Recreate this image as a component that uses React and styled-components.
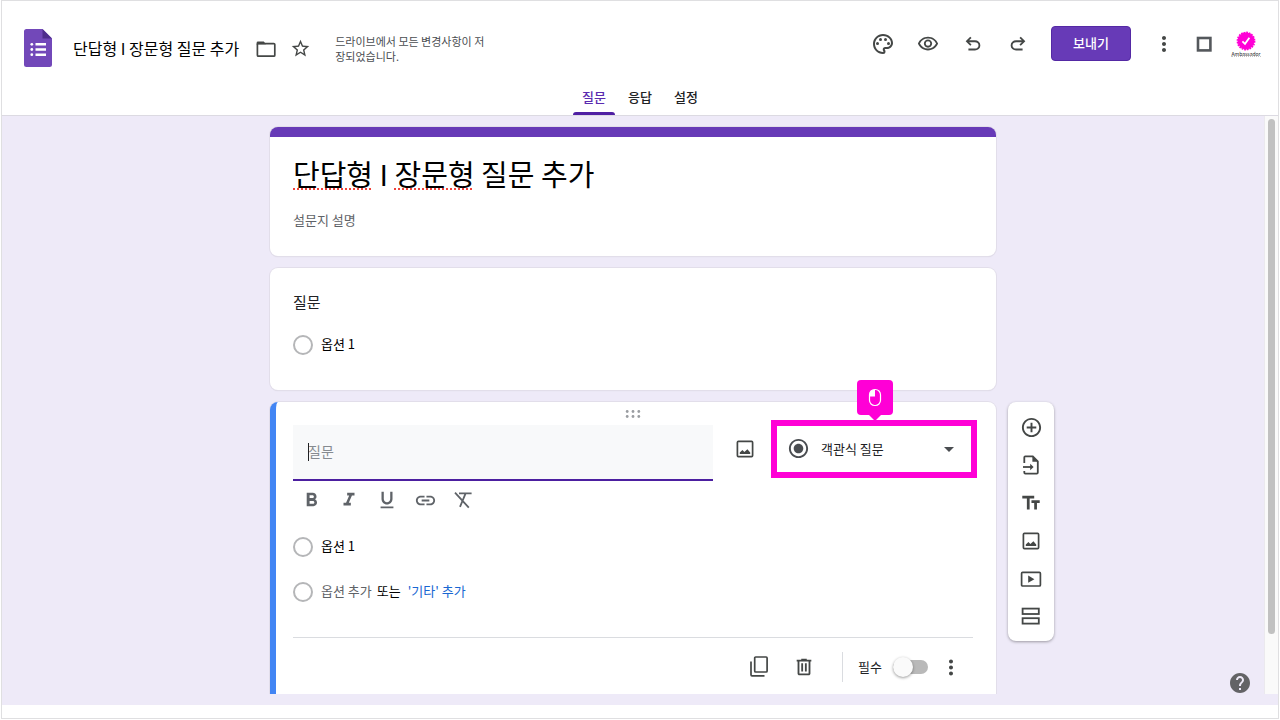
import { useState } from 'react'
import styled, { createGlobalStyle } from 'styled-components'
import {
    MdAddCircleOutline,
    MdArrowDropDown,
    MdFormatBold,
    MdFormatItalic,
    MdFormatUnderlined,
    MdHelp,
    MdLink,
    MdMoreVert,
    MdOutlinePalette,
    MdOutlineVisibility,
    MdRadioButtonChecked,
    MdStarBorder,
    MdTextFields,
} from 'react-icons/md'

const TABS = ['질문', '응답', '설정']

function FormsLogo() {
    return (
        <svg width="28" height="38" viewBox="0 0 28 38" aria-hidden="true">
            <path d="M2.5 0H18.5L28 9.5V35.5A2.5 2.5 0 0 1 25.5 38H2.5A2.5 2.5 0 0 1 0 35.5V2.5A2.5 2.5 0 0 1 2.5 0Z" fill="#7248b9" />
            <path d="M18.5 0L28 9.5H18.5Z" fill="#4e2d8c" />
            <path d="M11.5 14H22V16.5H11.5ZM11.5 19.2H22V21.7H11.5ZM11.5 24.5H22V27H11.5Z" fill="#fff" />
            <circle cx="7.8" cy="15.3" r="1.4" fill="#fff" />
            <circle cx="7.8" cy="20.5" r="1.4" fill="#fff" />
            <circle cx="7.8" cy="25.7" r="1.4" fill="#fff" />
        </svg>
    )
}

function FolderIcon() {
    return (
        <svg width="24" height="24" viewBox="0 0 24 24" fill="none" stroke="currentColor" strokeWidth="1.7" aria-hidden="true">
            <rect x="3.4" y="6.6" width="17.4" height="12.6" rx="1" />
            <path d="M2.6 8V6A1.4 1.4 0 0 1 4 4.6H9.8L12 7.2H3Z" fill="currentColor" stroke="none" />
        </svg>
    )
}

function UndoIcon() {
    return (
        <svg width="22" height="22" viewBox="0 -960 960 960" fill="currentColor" aria-hidden="true">
            <path d="M280-200v-80h284q63 0 109.5-40T720-420q0-60-46.5-100T564-560H312l104 104-56 56-200-200 200-200 56 56-104 104h252q97 0 166.5 63T800-420q0 94-69.5 157T564-200H280Z" />
        </svg>
    )
}

function RedoIcon() {
    return (
        <svg width="22" height="22" viewBox="0 -960 960 960" fill="currentColor" aria-hidden="true">
            <path d="M396-200q-97 0-166.5-63T160-420q0-94 69.5-157T396-640h252L544-744l56-56 200 200-200 200-56-56 104-104H396q-63 0-109.5 40T240-420q0 60 46.5 100T396-280h284v80H396Z" />
        </svg>
    )
}

function SquareIcon() {
    return (
        <svg width="24" height="24" viewBox="0 0 24 24" fill="none" stroke="#54585c" strokeWidth="2.6" aria-hidden="true">
            <rect x="6" y="6" width="12.4" height="12.4" />
        </svg>
    )
}

function ClearFormatIcon() {
    return (
        <svg width="24" height="24" viewBox="0 0 24 24" fill="none" stroke="currentColor" strokeWidth="1.8" aria-hidden="true">
            <path d="M8 5.4H20.6M14.6 5.4L9 18.8M4 4.6L17.8 19.6" />
        </svg>
    )
}

function TrashIcon() {
    return (
        <svg width="22" height="22" viewBox="0 -960 960 960" fill="currentColor" aria-hidden="true">
            <path d="M280-120q-33 0-56.5-23.5T200-200v-520h-40v-80h200v-40h240v40h200v80h-40v520q0 33-23.5 56.5T680-120H280Zm400-600H280v520h400v-520ZM360-280h80v-360h-80v360Zm160 0h80v-360h-80v360Z" />
        </svg>
    )
}

function CopyIcon() {
    return (
        <svg width="24" height="24" viewBox="0 0 24 24" fill="none" stroke="currentColor" strokeWidth="1.7" aria-hidden="true">
            <rect x="7.7" y="2" width="12.4" height="15" rx="1" />
            <path d="M4 6.5V19.8A1 1 0 0 0 5 20.8H17.5" />
        </svg>
    )
}

function PhotoIcon() {
    return (
        <svg width="24" height="24" viewBox="0 0 24 24" fill="none" stroke="currentColor" strokeWidth="1.7" aria-hidden="true">
            <rect x="4.4" y="4.4" width="15.2" height="15.2" rx="1" />
            <path d="M6.8 17V15.6L9.4 13L11.4 15L14.4 12.2L17.2 15.6V17Z" fill="currentColor" stroke="none" />
        </svg>
    )
}

function VideoIcon() {
    return (
        <svg width="24" height="24" viewBox="0 0 24 24" fill="none" stroke="currentColor" strokeWidth="1.7" aria-hidden="true">
            <rect x="2.6" y="5.4" width="18.8" height="13.6" rx="1" />
            <path d="M9.2 8.6L15.4 12.2L9.2 15.8Z" fill="currentColor" stroke="none" />
        </svg>
    )
}

function ImportIcon() {
    return (
        <svg width="24" height="24" viewBox="0 0 24 24" fill="none" stroke="currentColor" strokeWidth="1.8" aria-hidden="true">
            <path d="M5.3 10V4.4A1 1 0 0 1 6.3 3.4H13.8L18.8 8.4V19.6A1 1 0 0 1 17.8 20.6H6.3A1 1 0 0 1 5.3 19.6V18" />
            <path d="M13.4 3.4V8.8H18.8Z" fill="currentColor" stroke="none" />
            <path d="M4 14H13" />
            <path d="M11.2 10.8L14.6 14L11.2 17.2Z" fill="currentColor" stroke="none" />
        </svg>
    )
}

function SectionIcon() {
    return (
        <svg width="24" height="24" viewBox="0 0 24 24" fill="none" stroke="currentColor" strokeWidth="1.8" aria-hidden="true">
            <rect x="3.6" y="3.6" width="16.2" height="5.4" />
            <rect x="3.6" y="13.2" width="16.2" height="5.4" />
        </svg>
    )
}

function DragDots() {
    return (
        <svg width="18" height="10" viewBox="0 0 18 10" fill="#9a9da1" aria-hidden="true">
            {[3.2, 9, 14.8].map((x) => (
                <g key={x}>
                    <circle cx={x} cy="2.5" r="1.4" />
                    <circle cx={x} cy="7.5" r="1.4" />
                </g>
            ))}
        </svg>
    )
}

function MouseIcon() {
    return (
        <svg width="14" height="19" viewBox="0 0 14 19" fill="none" aria-hidden="true">
            <rect x="1.5" y="1.5" width="11" height="16" rx="5.2" stroke="#fff" strokeWidth="1.2" />
            <path d="M7 1.5V8.5H1.5V6.7A5.2 5.2 0 0 1 6.7 1.5Z" fill="#fff" />
        </svg>
    )
}

function Header() {
    const [active, setActive] = useState(TABS[0])

    return (
        <TopBar>
            <TopRow>
                <DocGroup>
                    <FormsLogo />
                    <DocName>단답형 I 장문형 질문 추가</DocName>
                    <DocActions>
                        <IconButton aria-label="폴더로 이동"><FolderIcon /></IconButton>
                        <IconButton aria-label="별표"><MdStarBorder size={21} /></IconButton>
                    </DocActions>
                    <SaveStatus>드라이브에서 모든 변경사항이 저장되었습니다.</SaveStatus>
                </DocGroup>
                <ToolGroup>
                    <IconButton aria-label="테마 맞춤설정"><MdOutlinePalette size={24} /></IconButton>
                    <IconButton aria-label="미리보기"><MdOutlineVisibility size={22} /></IconButton>
                    <IconButton aria-label="실행취소"><UndoIcon /></IconButton>
                    <IconButton aria-label="재실행"><RedoIcon /></IconButton>
                    <SendButton>보내기</SendButton>
                    <AccountGroup>
                        <IconButton aria-label="더보기"><MdMoreVert size={24} /></IconButton>
                        <IconButton aria-label="앱"><SquareIcon /></IconButton>
                        <Avatar aria-label="계정">
                            <svg width="20" height="20" viewBox="0 0 20 20" aria-hidden="true">
                                <circle cx="10" cy="10" r="8.4" fill="#ff00d6" />
                                <circle cx="10" cy="10" r="8.6" fill="none" stroke="#ff00d6" strokeWidth="1.6" strokeDasharray="1.8 0.9" />
                                <path d="M6.4 10.4L9 12.8L13.4 6.8" fill="none" stroke="#fff" strokeWidth="1.8" />
                            </svg>
                            <AvatarName>Ambassador</AvatarName>
                        </Avatar>
                    </AccountGroup>
                </ToolGroup>
            </TopRow>
            <TabList>
                {TABS.map((tab) => (
                    <Tab key={tab} $active={tab === active} onClick={() => setActive(tab)}>{tab}</Tab>
                ))}
            </TabList>
        </TopBar>
    )
}

function QuestionEditor() {
    return (
        <EditorCard>
            <DragHandle><DragDots /></DragHandle>
            <QuestionRow>
                <QuestionField>
                    <Caret />
                    <QuestionInput type="text" placeholder="질문" aria-label="질문" />
                </QuestionField>
                <TypeGroup>
                    <IconButton aria-label="이미지 추가"><PhotoIcon /></IconButton>
                    <TypePicker>
                        <TypeIcon><MdRadioButtonChecked size={23} /></TypeIcon>
                        <TypeSelect aria-label="질문 유형" defaultValue="radio">
                            <option value="radio">객관식 질문</option>
                            <option value="short">단답형</option>
                            <option value="long">장문형</option>
                        </TypeSelect>
                        <TypeArrow><MdArrowDropDown size={24} /></TypeArrow>
                        <ClickHint><MouseIcon /></ClickHint>
                    </TypePicker>
                </TypeGroup>
            </QuestionRow>
            <FormatRow>
                <IconButton $soft aria-label="굵게"><MdFormatBold size={23} /></IconButton>
                <IconButton $soft aria-label="기울임꼴"><MdFormatItalic size={22} /></IconButton>
                <IconButton $soft aria-label="밑줄"><MdFormatUnderlined size={22} /></IconButton>
                <IconButton $soft aria-label="링크 삽입"><MdLink size={23} /></IconButton>
                <IconButton $soft aria-label="서식 삭제"><ClearFormatIcon /></IconButton>
            </FormatRow>
            <Option>
                <Radio type="radio" id="edit-option" name="edit" />
                <OptionLabel htmlFor="edit-option">옵션 1</OptionLabel>
            </Option>
            <Option>
                <Radio type="radio" id="edit-add" name="edit" />
                <OptionLabel htmlFor="edit-add" $muted>옵션 추가</OptionLabel>
                <OrText>또는</OrText>
                <OtherButton>'기타' 추가</OtherButton>
            </Option>
            <EditorFooter>
                <FooterActions>
                    <IconButton aria-label="복사"><CopyIcon /></IconButton>
                    <IconButton aria-label="삭제"><TrashIcon /></IconButton>
                </FooterActions>
                <RequiredGroup>
                    <RequiredLabel htmlFor="required">필수</RequiredLabel>
                    <Toggle type="checkbox" id="required" />
                    <IconButton aria-label="옵션 더보기"><MdMoreVert size={25} /></IconButton>
                </RequiredGroup>
            </EditorFooter>
        </EditorCard>
    )
}

function App() {
    return (
        <>
            <GlobalStyle />
            <Frame>
                <Header />
                <Canvas>
                    <ScrollArea>
                        <FormGrid>
                            <TitleCard>
                                <FormTitle>
                                    <Misspelled>단답형</Misspelled> I <Misspelled>장문형</Misspelled> 질문 추가
                                </FormTitle>
                                <Description type="text" placeholder="설문지 설명" aria-label="설문지 설명" />
                            </TitleCard>
                            <QuestionCard>
                                <QuestionTitle>질문</QuestionTitle>
                                <Option>
                                    <Radio type="radio" id="view-option" name="view" />
                                    <OptionLabel htmlFor="view-option">옵션 1</OptionLabel>
                                </Option>
                            </QuestionCard>
                            <QuestionEditor />
                            <SideTools>
                                <IconButton aria-label="질문 추가"><MdAddCircleOutline size={23} /></IconButton>
                                <IconButton aria-label="질문 가져오기"><ImportIcon /></IconButton>
                                <IconButton aria-label="제목 및 설명 추가"><MdTextFields size={22} /></IconButton>
                                <IconButton aria-label="이미지 추가"><PhotoIcon /></IconButton>
                                <IconButton aria-label="동영상 추가"><VideoIcon /></IconButton>
                                <IconButton aria-label="섹션 추가"><SectionIcon /></IconButton>
                            </SideTools>
                        </FormGrid>
                        <ScrollTrack><ScrollThumb /></ScrollTrack>
                    </ScrollArea>
                    <HelpButton aria-label="도움말"><MdHelp size={24} /></HelpButton>
                </Canvas>
            </Frame>
        </>
    )
}

const GlobalStyle = createGlobalStyle`
    * {
        box-sizing: border-box;
    }
    body {
        margin: 0;
        background: #fff;
        color: #202124;
        font-family: "Noto Sans CJK KR", "Noto Sans", sans-serif;
        font-size: 13px;
    }
    button, input, select {
        font: inherit;
        color: inherit;
        margin: 0;
    }
    svg {
        display: block;
    }
`

const Frame = styled.div`
    display: flex;
    flex-direction: column;
    height: calc(100vh - 1px);
    margin: 0 1px;
    padding-bottom: 13px;
    border: 1px solid #dfdfe1;
`

const TopBar = styled.header`
    flex: none;
    border-bottom: 1px solid #dcdae2;
`

const TopRow = styled.div`
    display: flex;
    justify-content: space-between;
    align-items: flex-start;
    height: 79px;
    padding: 23px 18px 0 22px;
`

const DocGroup = styled.div`
    display: flex;
    align-items: center;
    height: 47px;
`

const DocName = styled.div`
    margin: 0 15px 0 21px;
    font-size: 16px;
    line-height: 24px;
    white-space: nowrap;
    color: #000;
`

const DocActions = styled.div`
    display: flex;
    gap: 10px;
    padding-top: 2px;
`

const SaveStatus = styled.div`
    width: 156px;
    margin-left: 23px;
    padding-top: 2px;
    font-size: 11px;
    line-height: 15px;
    color: #4a4d51;
    word-break: break-all;
`

const ToolGroup = styled.div`
    display: flex;
    align-items: center;
    gap: 21px;
    height: 39px;
`

const AccountGroup = styled.div`
    display: flex;
    align-items: center;
    gap: 16px;
`

const IconButton = styled.button`
    display: flex;
    align-items: center;
    justify-content: center;
    flex: none;
    width: 24px;
    height: 24px;
    padding: 0;
    border: none;
    background: none;
    color: ${(props) => (props.$soft ? '#5f6368' : '#444746')};
    cursor: pointer;
`

const SendButton = styled.button`
    height: 35px;
    padding: 0 21px 2px;
    border: 1px solid #5429a4;
    border-radius: 4px;
    background: #673ab7;
    color: #fff;
    font-weight: 500;
    cursor: pointer;
`

const Avatar = styled.button`
    display: flex;
    flex-direction: column;
    align-items: center;
    width: 28px;
    padding: 0;
    border: none;
    background: none;
`

const AvatarName = styled.span`
    border-bottom: 1px dotted #c4c4c4;
    font-size: 5px;
    line-height: 5px;
`

const TabList = styled.nav`
    display: flex;
    justify-content: center;
    gap: 4px;
`

const Tab = styled.button`
    position: relative;
    height: 35px;
    padding: 0 9px 2px;
    border: none;
    background: none;
    font-weight: 500;
    color: ${(props) => (props.$active ? '#5b2bb0' : '#202124')};
    cursor: pointer;

    &::after {
        content: '';
        display: ${(props) => (props.$active ? 'block' : 'none')};
        position: absolute;
        left: 0;
        right: 0;
        bottom: 0;
        height: 3px;
        border-radius: 3px 3px 0 0;
        background: #4f1fa3;
    }
`

const Canvas = styled.main`
    position: relative;
    display: flex;
    flex-direction: column;
    flex: 1;
    min-height: 0;
    padding-bottom: 11px;
    background: #eeeaf8;
`

const ScrollArea = styled.div`
    display: flex;
    flex: 1;
    min-height: 0;
    overflow: hidden;
`

const FormGrid = styled.div`
    display: grid;
    grid-template-columns: 1fr minmax(0, 726px) 1fr;
    align-content: start;
    gap: 12px;
    flex: 1;
    padding-top: 11px;
`

const Card = styled.section`
    grid-column: 2;
    padding: 0 23px;
    border-radius: 8px;
    background: #fff;
    box-shadow: 0 0 0 1px #e2deea, 0 1px 1px #d6d3de;
`

const TitleCard = styled(Card)`
    padding-top: 16px;
    padding-bottom: 25px;
    border-top: 10px solid #673ab7;
`

const FormTitle = styled.h1`
    margin: 0 0 14px;
    font-size: 29px;
    font-weight: 400;
    line-height: 40px;
    color: #000;
`

const Misspelled = styled.span`
    text-decoration: underline dotted #f0433a 2px;
    text-underline-offset: 2px;
    text-decoration-skip-ink: none;
`

const Description = styled.input`
    display: block;
    width: 100%;
    height: 24px;
    padding: 0;
    border: none;
    outline: none;

    &::placeholder {
        color: #5f6368;
        opacity: 1;
    }
`

const QuestionCard = styled(Card)`
    padding-top: 22px;
    padding-bottom: 23px;
`

const QuestionTitle = styled.h2`
    margin: 0 0 8px;
    font-size: 15px;
    font-weight: 400;
    line-height: 24px;
`

const Option = styled.div`
    display: flex;
    align-items: center;
    height: 45px;
`

const Radio = styled.input`
    appearance: none;
    width: 20px;
    height: 20px;
    margin: 0 8px 0 0;
    border: 2px solid #b5b6b8;
    border-radius: 50%;
`

const OptionLabel = styled.label`
    padding-bottom: 2px;
    color: ${(props) => (props.$muted ? '#5f6368' : '#000')};
`

const OrText = styled.span`
    margin: 0 7px 0 5px;
    padding-bottom: 2px;
    color: #000;
`

const OtherButton = styled.button`
    padding: 0 0 2px;
    border: none;
    background: none;
    color: #1967d2;
    cursor: pointer;
`

const EditorCard = styled(Card)`
    padding-left: 17px;
    padding-bottom: 24px;
    border-left: 6px solid #4285f4;
`

const DragHandle = styled.div`
    display: flex;
    justify-content: center;
    align-items: center;
    height: 23px;
`

const QuestionRow = styled.div`
    display: flex;
    align-items: flex-start;
    gap: 20px;
    padding-right: 2px;
`

const QuestionField = styled.div`
    position: relative;
    flex: 1;
`

const Caret = styled.span`
    position: absolute;
    left: 15px;
    top: 18px;
    width: 1px;
    height: 18px;
    background: #202124;
`

const QuestionInput = styled.input`
    display: block;
    width: 100%;
    height: 56px;
    padding: 0 15px 2px;
    border: none;
    border-bottom: 2px solid #4c1fa0;
    outline: none;
    background: #f8f9fa;
    font-size: 14px;

    &::placeholder {
        color: #868b90;
        opacity: 1;
    }
`

const TypeGroup = styled.div`
    display: flex;
    align-items: center;
    gap: 20px;
    height: 48px;
`

const TypePicker = styled.div`
    position: relative;
    width: 194px;
    outline: 6px solid #ff00d6;
`

const TypeSelect = styled.select`
    display: block;
    appearance: none;
    width: 100%;
    height: 46px;
    padding: 0 34px 2px 44px;
    border: none;
    outline: none;
    background: #fff;
`

const TypeIcon = styled.span`
    position: absolute;
    left: 10px;
    top: 11px;
    color: #4a4d51;
    pointer-events: none;
`

const TypeArrow = styled.span`
    position: absolute;
    right: 10px;
    top: 11px;
    color: #4a4d51;
    pointer-events: none;
`

const ClickHint = styled.span`
    position: absolute;
    left: 50%;
    bottom: calc(100% + 11px);
    display: flex;
    align-items: center;
    justify-content: center;
    width: 36px;
    height: 35px;
    margin-left: -17px;
    border-radius: 4px;
    background: #ff00d6;

    &::after {
        content: '';
        position: absolute;
        top: 100%;
        left: 12px;
        border: 6px solid transparent;
        border-top-color: #ff00d6;
        border-bottom: none;
    }
`

const FormatRow = styled.div`
    display: flex;
    align-items: center;
    gap: 14px;
    height: 38px;
    margin-bottom: 5px;
    padding-left: 6px;
`

const EditorFooter = styled.div`
    display: flex;
    justify-content: flex-end;
    align-items: center;
    height: 59px;
    margin-top: 23px;
    padding-right: 10px;
    border-top: 1px solid #dadce0;
`

const FooterActions = styled.div`
    display: flex;
    gap: 21px;
    padding-right: 26px;
`

const RequiredGroup = styled.div`
    display: flex;
    align-items: center;
    gap: 11px;
    height: 30px;
    padding-left: 15px;
    border-left: 1px solid #dadce0;
`

const RequiredLabel = styled.label`
    padding-bottom: 2px;
`

const Toggle = styled.input`
    appearance: none;
    position: relative;
    width: 35px;
    height: 14px;
    border-radius: 7px;
    background: #b9b9b9;
    cursor: pointer;

    &::before {
        content: '';
        position: absolute;
        left: 0;
        top: -3px;
        width: 20px;
        height: 20px;
        border-radius: 50%;
        background: #fafafa;
        box-shadow: 0 1px 3px rgba(0, 0, 0, 0.4);
    }
    &:checked::before {
        left: 15px;
        background: #673ab7;
    }
`

const SideTools = styled.div`
    grid-column: 3;
    grid-row: 3;
    justify-self: start;
    align-self: start;
    display: flex;
    flex-direction: column;
    gap: 14px;
    padding: 13px 11px 12px;
    border-radius: 8px;
    background: #fff;
    box-shadow: 0 1px 3px rgba(0, 0, 0, 0.35);
`

const ScrollTrack = styled.div`
    flex: none;
    width: 14px;
    padding: 3px;
    border-left: 1px solid #ebe9ee;
    background: #fafafa;
`

const ScrollThumb = styled.div`
    width: 7px;
    height: 90%;
    border-radius: 4px;
    background: #c1c1c1;
`

const HelpButton = styled.button`
    position: absolute;
    right: 26px;
    bottom: 10px;
    padding: 0;
    border: none;
    background: none;
    color: #636366;
    cursor: pointer;
`

export default App
